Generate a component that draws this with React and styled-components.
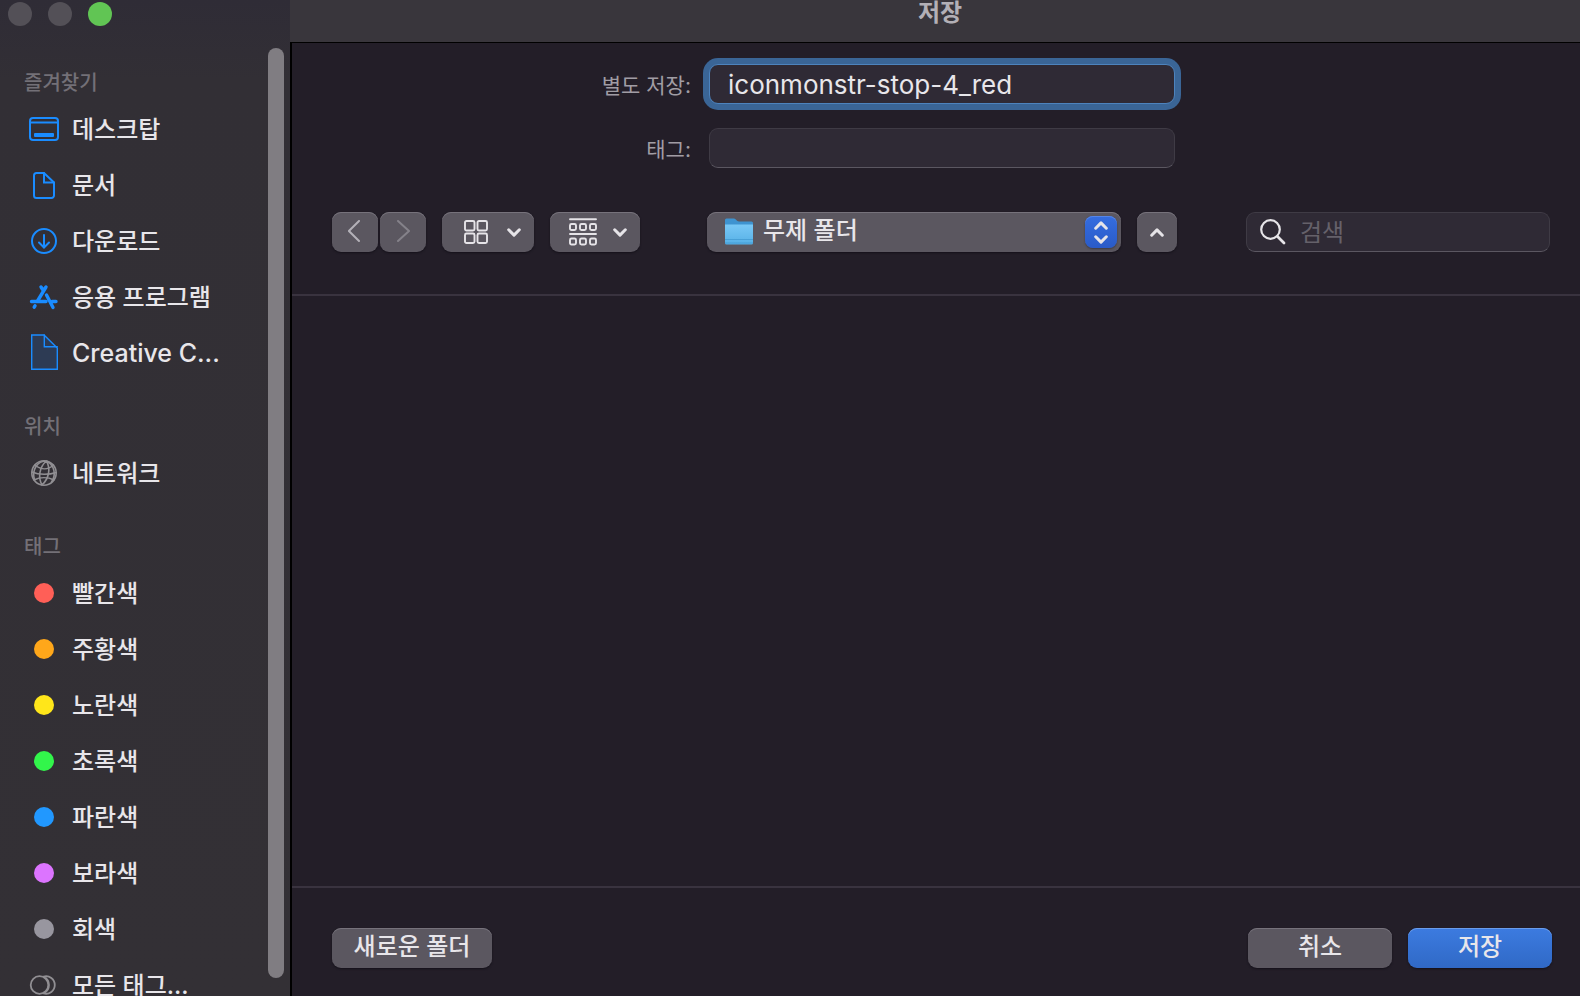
import React, { useState } from "react";
import styled, { createGlobalStyle, css } from "styled-components";

const GlobalStyle = createGlobalStyle`
  * {
    box-sizing: border-box;
  }
  body {
    margin: 0;
    background: #231e28;
    color: #e8e6ea;
    font-family: Inter, "Noto Sans CJK KR", sans-serif;
    font-size: 24px;
  }
  button,
  input,
  select {
    font: inherit;
    color: inherit;
  }
`;

const BLUE = "#1a8cff";

const DesktopIcon = () => (
  <Icon viewBox="0 0 32 40" stroke={BLUE}>
    <rect x="2" y="9" width="28" height="22" rx="3" />
    <path d="M2 13.500h28" />
    <rect x="6" y="24" width="20" height="4" rx="1" fill={BLUE} stroke="none" />
  </Icon>
);

const DocumentIcon = () => (
  <Icon viewBox="0 0 32 40" stroke={BLUE}>
    <path d="M16 8H8.500a2.500 2.500 0 0 0-2.500 2.500v20a2.500 2.500 0 0 0 2.500 2.500h15a2.500 2.500 0 0 0 2.500-2.500V17.500Z" />
    <path d="M16 8v9.500h10" />
  </Icon>
);

const DownloadIcon = () => (
  <Icon viewBox="0 0 32 40" stroke={BLUE}>
    <circle cx="16" cy="20" r="12" />
    <path d="M16 14v12M11 21.500l5 5 5-5" />
  </Icon>
);

const AppsIcon = () => (
  <Icon viewBox="0 0 32 40" stroke={BLUE} strokeWidth="3.4">
    <path d="M18 10 9.500 24M13 10l2 3M18.500 18 25 30.500M3.500 24.500H18M24 24.500h4M7 28.800l-.8 1.400" />
  </Icon>
);

const FileIcon = () => (
  <Icon viewBox="0 0 32 40" stroke={BLUE} strokeWidth="1.4">
    <path d="M3.700 2H16l13.300 13v21.200H3.700Z" fill="#2d3b54" />
    <path d="M16.300 2v11.700h13" />
  </Icon>
);

const NetworkIcon = () => (
  <Icon viewBox="0 0 32 40" stroke="#918f93" strokeWidth="1.6">
    <circle cx="16" cy="20" r="12.200" />
    <path d="M18.500 8C11 14 10 25 14 32M18.500 8c4 7 3 17-4.500 24M18.500 8c8 4 10 14 5 21M18.500 8C9 8 3.500 17 6.500 27" />
    <path d="M7 12c6 5 13 5 18.500 0M4 19c7 3 17 3 24 .5M6 27c6-3 14-3 20 0" />
  </Icon>
);

const AllTagsIcon = () => (
  <Icon viewBox="0 0 32 40" stroke="#918f93" strokeWidth="1.8">
    <circle cx="11.500" cy="20" r="8.800" />
    <path d="M15.700 11.500a8.800 8.800 0 1 1 0 17c7-4 7-13 0-17Z" />
  </Icon>
);

const Chevron = ({ up }) => (
  <svg width="14" height="9" viewBox="0 0 14 9" fill="none" stroke="#e6e4e8" strokeWidth="3" strokeLinecap="round" strokeLinejoin="round">
    <path d={up ? "M1.700 7.200l5.300-5.300 5.300 5.300" : "M1.700 1.800l5.300 5.300 5.300-5.300"} />
  </svg>
);

const Arrow = ({ right }) => (
  <svg width="14" height="24" viewBox="0 0 14 24" fill="none" stroke={right ? "#85828a" : "#b4b1b8"} strokeWidth="2" strokeLinecap="round" strokeLinejoin="round">
    <path d={right ? "M2 1l11 10L2 21" : "M11 1L0.900 11l10.100 10"} />
  </svg>
);

const GridIcon = () => (
  <svg width="24" height="24" viewBox="0 0 24 24" fill="none" stroke="#e6e4e8" strokeWidth="1.900">
    <rect x="1" y="1" width="9.500" height="9.500" rx="1.500" />
    <rect x="13.500" y="1" width="9.500" height="9.500" rx="1.500" />
    <rect x="1" y="13.500" width="9.500" height="9.500" rx="1.500" />
    <rect x="13.500" y="13.500" width="9.500" height="9.500" rx="1.500" />
  </svg>
);

const GroupIcon = () => (
  <svg width="28" height="28" viewBox="0 0 28 28" fill="none" stroke="#e6e4e8" strokeWidth="1.900" strokeLinecap="round">
    <path d="M1 1.200h26M1 16h26" />
    {[6, 20.5].map((y) =>
      [1, 11, 21].map((x) => <rect key={`${x}-${y}`} x={x} y={y} width="6" height="6" rx="1.500" />)
    )}
  </svg>
);

const FolderIcon = () => (
  <svg width="28" height="28" viewBox="0 0 28 28">
    <defs>
      <linearGradient id="folder" x1="0" y1="0" x2="0" y2="1">
        <stop offset="0" stopColor="#79c8f6" />
        <stop offset="1" stopColor="#56b0e6" />
      </linearGradient>
    </defs>
    <path d="M0 2a1.500 1.500 0 0 1 1.500-1.500h7.500c2 0 2.500 3 5 3h12.500A1.500 1.500 0 0 1 28 5v8H0Z" fill="#3e93d0" />
    <path d="M0 6.500h28v18.500a1.500 1.500 0 0 1-1.500 1.500h-25A1.500 1.500 0 0 1 0 25Z" fill="url(#folder)" />
    <path d="M0 21.500h28M0 25h28" stroke="#429bd2" strokeWidth=".8" />
  </svg>
);

const SearchIcon = () => (
  <svg width="26" height="26" viewBox="0 0 26 26" fill="none" stroke="#e6e4e8" strokeLinecap="round">
    <circle cx="10.500" cy="10.500" r="9.300" strokeWidth="2.200" />
    <path d="M17.500 17.500l6.500 6.500" strokeWidth="2.800" />
  </svg>
);

const sections = [
  {
    title: "즐겨찾기",
    items: [
      { name: "데스크탑", icon: <DesktopIcon /> },
      { name: "문서", icon: <DocumentIcon /> },
      { name: "다운로드", icon: <DownloadIcon /> },
      { name: "응용 프로그램", icon: <AppsIcon /> },
      { name: "Creative C...", icon: <FileIcon />, latin: true },
    ],
  },
  {
    title: "위치",
    items: [{ name: "네트워크", icon: <NetworkIcon /> }],
  },
  {
    title: "태그",
    items: [
      { name: "빨간색", color: "#ff5f57" },
      { name: "주황색", color: "#ffa71a" },
      { name: "노란색", color: "#ffe61a" },
      { name: "초록색", color: "#32f54b" },
      { name: "파란색", color: "#2198ff" },
      { name: "보라색", color: "#dc74ff" },
      { name: "회색", color: "#98969f" },
      { name: "모든 태그...", icon: <AllTagsIcon /> },
    ],
  },
];

const App = () => {
  const [fileName, setFileName] = useState("iconmonstr-stop-4_red");
  const [tags, setTags] = useState("");
  const [query, setQuery] = useState("");

  return (
    <Window>
      <GlobalStyle />
      <Sidebar>
        <SidebarContent>
          <TrafficLights>
            <Light aria-label="닫기" disabled />
            <Light aria-label="최소화" disabled />
            <Light aria-label="확대" $color="#61c554" />
          </TrafficLights>
          {sections.map(({ title, items }) => (
            <section key={title}>
              <SectionTitle>{title}</SectionTitle>
              <List>
                {items.map(({ name, icon, color, latin }) => (
                  <li key={name}>
                    <SidebarItem>
                      <IconBox>{icon || <Dot $color={color} />}</IconBox>
                      <ItemName $latin={latin}>{name}</ItemName>
                    </SidebarItem>
                  </li>
                ))}
              </List>
            </section>
          ))}
        </SidebarContent>
        <ScrollThumb />
      </Sidebar>

      <Main>
        <TitleBar>저장</TitleBar>
        <Body>
          <Form>
            <FieldLabel htmlFor="file-name">별도 저장:</FieldLabel>
            <TextInput
              id="file-name"
              $active
              spellCheck={false}
              value={fileName}
              onChange={(e) => setFileName(e.target.value)}
            />
            <FieldLabel htmlFor="file-tags">태그:</FieldLabel>
            <TextInput id="file-tags" value={tags} onChange={(e) => setTags(e.target.value)} />
          </Form>

          <Toolbar>
            <ToolGroup>
              <NavButtons>
                <NavButton aria-label="뒤로">
                  <Arrow />
                </NavButton>
                <NavButton aria-label="앞으로" disabled>
                  <Arrow right />
                </NavButton>
              </NavButtons>
              <MenuButton aria-label="보기" $wide>
                <GridIcon />
                <Chevron />
              </MenuButton>
              <MenuButton aria-label="그룹">
                <GroupIcon />
                <Chevron />
              </MenuButton>
            </ToolGroup>
            <ToolGroup>
              <FolderPicker>
                <FolderIcon />
                <FolderSelect aria-label="위치">
                  <option>무제 폴더</option>
                </FolderSelect>
                <Stepper>
                  <Chevron up />
                  <Chevron />
                </Stepper>
              </FolderPicker>
              <SquareButton aria-label="접기">
                <Chevron up />
              </SquareButton>
            </ToolGroup>
            <SearchBox>
              <SearchIcon />
              <SearchInput
                type="search"
                aria-label="검색"
                placeholder="검색"
                value={query}
                onChange={(e) => setQuery(e.target.value)}
              />
            </SearchBox>
          </Toolbar>

          <FileArea />

          <Footer>
            <PushButton $wide>새로운 폴더</PushButton>
            <FooterActions>
              <PushButton>취소</PushButton>
              <PushButton $primary>저장</PushButton>
            </FooterActions>
          </Footer>
        </Body>
      </Main>
    </Window>
  );
};

export default App;

const Window = styled.div`
  display: flex;
  height: 100vh;
  overflow: hidden;
`;

const Sidebar = styled.aside`
  display: flex;
  flex: 0 0 290px;
  background: linear-gradient(#2f2c36 0, #322f35 80px, #333035 100%);
`;

const SidebarContent = styled.nav`
  flex: 1;
  min-width: 0;
`;

const TrafficLights = styled.div`
  display: flex;
  gap: 16px;
  height: 37px;
  padding: 2px 8px;
`;

const Light = styled.button`
  width: 24px;
  height: 24px;
  padding: 0;
  border: 0;
  border-radius: 50%;
  background: ${({ $color }) => $color || "#535057"};
`;

const SectionTitle = styled.h2`
  height: 64px;
  margin: 0;
  padding: 32px 24px 0;
  font-size: 20px;
  font-weight: 500;
  line-height: 28px;
  color: #737077;
`;

const List = styled.ul`
  margin: 0;
  padding: 0;
  list-style: none;
`;

const SidebarItem = styled.button`
  display: flex;
  align-items: center;
  gap: 12px;
  width: 100%;
  height: 56px;
  padding: 0 0 0 28px;
  border: 0;
  background: none;
  font-weight: 500;
  text-align: left;
  white-space: nowrap;
`;

const ItemName = styled.span`
  padding-bottom: ${({ $latin }) => ($latin ? 0 : 4)}px;
  font-size: ${({ $latin }) => ($latin ? 25 : 24)}px;
`;

const IconBox = styled.span`
  display: flex;
  align-items: center;
  justify-content: center;
  width: 32px;
  height: 40px;
`;

const Icon = styled.svg.attrs(({ strokeWidth }) => ({
  fill: "none",
  strokeWidth: strokeWidth || 2,
  strokeLinecap: "round",
}))`
  width: 32px;
  height: 40px;
`;

const Dot = styled.span`
  width: 20px;
  height: 20px;
  border-radius: 50%;
  background: ${({ $color }) => $color};
`;

const ScrollThumb = styled.div`
  width: 16px;
  margin: 48px 6px 18px 0;
  border-radius: 8px;
  background: #807d82;
`;

const Main = styled.main`
  display: flex;
  flex: 1;
  flex-direction: column;
  min-width: 0;
`;

const TitleBar = styled.h1`
  height: 42px;
  margin: 0;
  padding-left: 10px;
  background: #39363c;
  color: #b3b0b6;
  font-size: 24px;
  font-weight: 700;
  line-height: 26px;
  text-align: center;
`;

const Body = styled.div`
  display: flex;
  flex: 1;
  flex-direction: column;
  border-top: 1px solid #000;
  border-left: 2px solid #000;
`;

const Form = styled.div`
  display: grid;
  grid-template-columns: 1fr 466px 1fr;
  gap: 24px 18px;
  padding: 21px 0 44px 12px;
`;

const FieldLabel = styled.label`
  grid-column: 1;
  color: #a09da4;
  font-size: 21px;
  line-height: 44px;
  height: 40px;
  text-align: right;
`;

const fieldStyle = css`
  height: 40px;
  border: 1px solid #3f3b45;
  border-bottom-color: #5b5761;
  border-radius: 9px;
  background: #2f2a35;
`;

const TextInput = styled.input`
  ${fieldStyle}
  width: 100%;
  padding: 0 18px;
  outline: none;
  font-size: 26px;
  ${({ $active }) =>
    $active &&
    css`
      border-color: #4d83bd;
      box-shadow: 0 0 0 6px #3a6596;
    `}
`;

const Toolbar = styled.div`
  display: grid;
  grid-template-columns: 1fr 470px 1fr;
  padding: 0 28px 42px 40px;
  border-bottom: 2px solid #39333f;
`;

const ToolGroup = styled.div`
  display: flex;
  gap: 16px;
`;

const NavButtons = styled.div`
  display: flex;
  gap: 2px;
`;

const raised = css`
  border: 0;
  border-radius: 9px;
  background: #5b5760;
  box-shadow: inset 0 1px 0 #76727b, 0 1px 2px #15111a;
`;

const ToolButton = styled.button`
  ${raised}
  display: flex;
  align-items: center;
  justify-content: center;
  height: 40px;
  padding: 0;
`;

const NavButton = styled(ToolButton)`
  width: 46px;
`;

const SquareButton = styled(ToolButton)`
  width: 40px;
`;

const MenuButton = styled(ToolButton)`
  justify-content: space-between;
  width: ${({ $wide }) => ($wide ? 92 : 90)}px;
  padding: 0 13px 0 ${({ $wide }) => ($wide ? 22 : 19)}px;
`;

const FolderPicker = styled.div`
  ${raised}
  display: flex;
  flex: 1;
  align-items: center;
  height: 40px;
  padding: 0 4px 0 18px;
`;

const FolderSelect = styled.select`
  flex: 1;
  height: 40px;
  padding: 0 0 4px 10px;
  border: 0;
  outline: none;
  appearance: none;
  background: none;
  font-weight: 500;
`;

const Stepper = styled.span`
  display: flex;
  flex-direction: column;
  align-items: center;
  justify-content: center;
  gap: 5px;
  width: 32px;
  height: 32px;
  border-radius: 8px;
  background: linear-gradient(#356de0, #2a5bc8);
  box-shadow: inset 0 1px 0 #5585e8, 0 1px 2px #3c3942;
  pointer-events: none;
`;

const SearchBox = styled.div`
  ${fieldStyle}
  display: flex;
  align-items: center;
  justify-self: end;
  gap: 14px;
  width: 304px;
  margin-right: 2px;
  padding: 0 13px;
`;

const SearchInput = styled.input`
  flex: 1;
  min-width: 0;
  padding: 0;
  border: 0;
  outline: none;
  background: none;
  &::placeholder {
    color: #65616a;
    opacity: 1;
  }
`;

const FileArea = styled.div`
  flex: 1;
`;

const Footer = styled.footer`
  display: flex;
  justify-content: space-between;
  padding: 40px 28px 28px 40px;
  border-top: 2px solid #39333f;
`;

const FooterActions = styled.div`
  display: flex;
  gap: 16px;
`;

const PushButton = styled.button`
  ${raised}
  width: ${({ $wide }) => ($wide ? 160 : 144)}px;
  height: 40px;
  padding: 0 0 2px;
  font-weight: 500;
  line-height: 38px;
  ${({ $primary }) =>
    $primary &&
    css`
      background: linear-gradient(#3c7be0, #3069c6);
      box-shadow: inset 0 1px 0 #6a9ceb, 0 1px 2px #15111a;
    `}
`;
